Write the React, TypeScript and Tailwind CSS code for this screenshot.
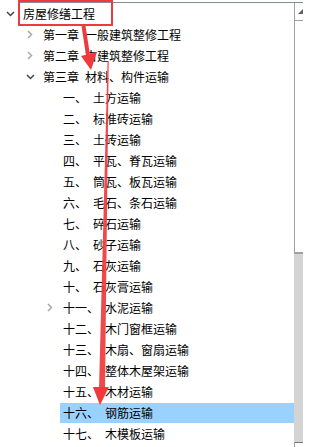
import React from 'react';

type Row = {
  level: 0 | 1 | 2;
  label?: string;
  text: string;
  icon?: 'down' | 'right';
  selected?: boolean;
};

const ROWS: Row[] = [
  { level: 0, text: '房屋修缮工程', icon: 'down' },
  { level: 1, label: '第一章', text: '一般建筑整修工程', icon: 'right' },
  { level: 1, label: '第二章', text: '古建筑整修工程', icon: 'right' },
  { level: 1, label: '第三章', text: '材料、构件运输', icon: 'down' },
  { level: 2, label: '一、', text: '土方运输' },
  { level: 2, label: '二、', text: '标准砖运输' },
  { level: 2, label: '三、', text: '土砖运输' },
  { level: 2, label: '四、', text: '平瓦、脊瓦运输' },
  { level: 2, label: '五、', text: '筒瓦、板瓦运输' },
  { level: 2, label: '六、', text: '毛石、条石运输' },
  { level: 2, label: '七、', text: '碎石运输' },
  { level: 2, label: '八、', text: '砂子运输' },
  { level: 2, label: '九、', text: '石灰运输' },
  { level: 2, label: '十、', text: '石灰膏运输' },
  { level: 2, label: '十一、', text: '水泥运输', icon: 'right' },
  { level: 2, label: '十二、', text: '木门窗框运输' },
  { level: 2, label: '十三、', text: '木扇、窗扇运输' },
  { level: 2, label: '十四、', text: '整体木屋架运输' },
  { level: 2, label: '十五、', text: '木材运输' },
  { level: 2, label: '十六、', text: '钢筋运输', selected: true },
  { level: 2, label: '十七、', text: '木模板运输' },
];

const INDENT = ['pl-0', 'pl-[20px]', 'pl-[40px]'];

const Chevron: React.FC<{ dir?: 'down' | 'right' }> = ({ dir }) => {
  if (dir === 'down') {
    return (
      <svg width="9" height="6" viewBox="0 0 9 6">
        <polyline points="1,1 4.5,4.5 8,1" fill="none" stroke="#454545" strokeWidth="1.5" />
      </svg>
    );
  }
  if (dir === 'right') {
    return (
      <svg width="6" height="9" viewBox="0 0 6 9">
        <polyline points="1,1 4.5,4.5 1,8" fill="none" stroke="#a8a8a8" strokeWidth="1.5" />
      </svg>
    );
  }
  return null;
};

const TreeRow: React.FC<{ row: Row }> = ({ row }) => (
  <div className={`h-[21px] flex items-center ${INDENT[row.level]}`}>
    <div className="w-[20px] h-[20px] flex items-center justify-center">
      <Chevron dir={row.icon} />
    </div>
    <div
      className={`h-[20px] flex-1 flex items-center pl-[3px] whitespace-nowrap ${
        row.selected ? 'bg-[#99d1ff]' : ''
      }`}
    >
      {row.label && <span>{row.label}</span>}
      <span className={row.label ? 'ml-[6px]' : ''}>{row.text}</span>
    </div>
  </div>
);

export default function App() {
  return (
    <div
      className="relative w-[303px] h-[447px] bg-white overflow-hidden text-[12px] leading-none text-black"
      style={{ fontFamily: '"Noto Sans CJK SC", "Noto Sans", sans-serif' }}
    >
      <div className="h-[2px]" />
      <div className="h-px ml-[18px] bg-[#868c94]" />

      <div className="flex h-[444px]">
        {/* tree */}
        <div className="w-[294px] overflow-hidden">
          {ROWS.map((r, i) => (
            <TreeRow key={i} row={r} />
          ))}
        </div>

        {/* scrollbar (cut off at the right edge) */}
        <div className="w-[9px] border-l border-[#a0a0a0] flex flex-col">
          <div className="h-[18px] border-b border-[#a0a0a0] relative">
            <svg className="absolute left-[3px] top-[5px]" width="6" height="7" viewBox="0 0 6 7">
              <polygon points="0,6 6,0 6,6" fill="#5f5f5f" />
            </svg>
          </div>
          <div className="h-[231px]" />
          <div className="h-[190px] -ml-px bg-[#d4d4d4] border-t-2 border-[#a0a0a0]" />
          <div className="flex-1 border-t border-[#7a7a7a]" />
        </div>
      </div>

      {/* annotation: red box + arrows */}
      <div className="absolute left-[18px] top-0 w-[95px] h-[26px] border-2 border-[#ec3a3f]" />
      <svg
        className="absolute inset-0 pointer-events-none"
        width="303"
        height="447"
        viewBox="0 0 303 447"
      >
        <line x1="83.5" y1="26" x2="88" y2="55" stroke="#f0383d" strokeWidth="4" />
        <polygon points="81,56 97,52 91,70" fill="#f0383d" />
        <polygon points="107.5,62 108.7,62 105,389 99,389" fill="#f0383d" opacity="0.92" />
        <polygon points="93,387 109,387 100,405" fill="#f0383d" />
      </svg>
    </div>
  );
}
